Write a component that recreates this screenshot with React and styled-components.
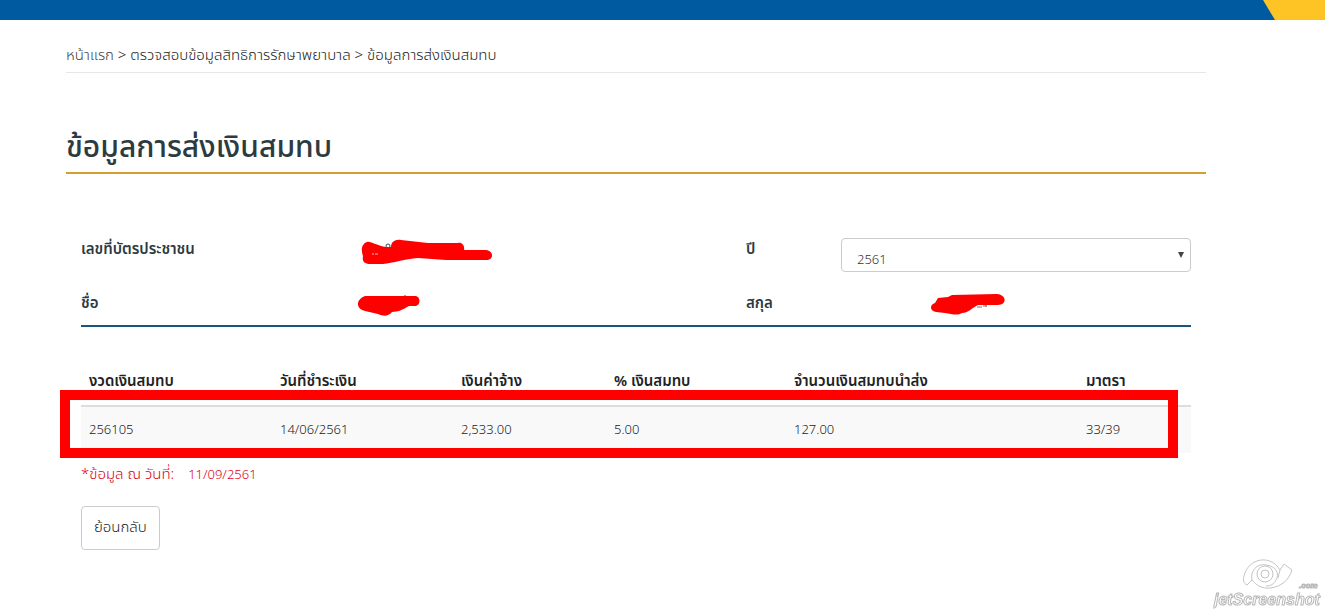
import React from 'react';
import styled, { createGlobalStyle } from 'styled-components';

const COLORS = {
	navy: '#005a9f',
	amber: '#fec325',
	gold: '#d59f2f',
	rule: '#1b557e',
	title: '#2d3b41',
	text: '#222',
	mark: '#f00',
	note: '#d90016',
	border: '#ccc',
};

const COLUMNS = [
	{ title: 'งวดเงินสมทบ', width: 191 },
	{ title: 'วันที่ชำระเงิน', width: 181 },
	{ title: 'เงินค่าจ้าง', width: 153 },
	{ title: '% เงินสมทบ', width: 180 },
	{ title: 'จำนวนเงินสมทบนำส่ง', width: 292 },
	{ title: 'มาตรา', width: 113 },
];

const ROWS = [['256105', '14/06/2561', '2,533.00', '5.00', '127.00', '33/39']];

const TABLE_WIDTH = COLUMNS.reduce((sum, column) => sum + column.width, 0);

const App = () => {
	return (
		<>
			<GlobalStyle />
			<TopBar>
				<TopBarCorner />
			</TopBar>
			<Page>
				<Breadcrumb aria-label="breadcrumb">
					<a href="#home">หน้าแรก</a> &gt; <Crumb href="#rights">ตรวจสอบข้อมูลสิทธิการรักษาพยาบาล</Crumb> &gt;{' '}
					<Crumb as="span">ข้อมูลการส่งเงินสมทบ</Crumb>
				</Breadcrumb>
				<Title>ข้อมูลการส่งเงินสมทบ</Title>

				<Content>
					<Details>
						<Label>เลขที่บัตรประชาชน</Label>
						<Value>
							<IdScribble />
						</Value>
						<Label as="label" htmlFor="year">ปี</Label>
						<SelectWrapper>
							<Select id="year" defaultValue="2561">
								<option>2561</option>
							</Select>
							<Arrow viewBox="0 0 6 6" aria-hidden="true">
								<path d="M0 0h6L3 6z" />
							</Arrow>
						</SelectWrapper>
						<Label>ชื่อ</Label>
						<Value>
							<NameScribble />
						</Value>
						<Label>สกุล</Label>
						<Value $indent>
							<SurnameScribble />
						</Value>
					</Details>

					<TableWrapper>
						<Table>
							<colgroup>
								{COLUMNS.map(column => (
									<col key={column.title} style={{ width: `${(column.width / TABLE_WIDTH) * 100}%` }} />
								))}
							</colgroup>
							<thead>
								<tr>
									{COLUMNS.map(column => (
										<HeadCell key={column.title} scope="col">{column.title}</HeadCell>
									))}
								</tr>
							</thead>
							<tbody>
								{ROWS.map(row => (
									<Row key={row[0]}>
										{row.map(value => (
											<Cell key={value}>{value}</Cell>
										))}
									</Row>
								))}
							</tbody>
						</Table>
						<Highlight />
					</TableWrapper>

					<Note>
						<span>*ข้อมูล ณ วันที่:</span>
						<NoteDate>11/09/2561</NoteDate>
					</Note>
					<BackButton type="button">ย้อนกลับ</BackButton>
				</Content>
			</Page>
			<Watermark />
		</>
	);
};

const IdScribble = () => (
	<Scribble width="136" height="30" viewBox="0 0 136 30">
		<circle cx="30" cy="8" r="2" fill="none" stroke="#444" />
		<path d="M9 4C13 3 19 8 28 9L33 9C33 4 37 1 43 2L70 5L100 5C104 4 107 8 106 12L128 12C136 13 136 22 128 22L88 22L60 20C47 21 35 25 25 26L12 26C6 26 4 23 5 18C3 13 3 6 9 4Z" />
		<path d="M14 16h2M17 16h3" stroke="#ffb3b3" />
	</Scribble>
);

const NameScribble = () => (
	<Scribble width="66" height="24" viewBox="0 0 66 24">
		<path d="M7 4L57 4C63 4 63 14 57 14L51 14C46 17 40 20 34 20C30 25 25 24 20 22L7 19C-3 17-2 7 7 4Z" />
		<path d="M46 4h2" stroke="#822" />
	</Scribble>
);

const SurnameScribble = () => (
	<Scribble width="76" height="24" viewBox="0 0 76 24">
		<path d="M46 15h5M55 15v-2M52 14h4" stroke="#777" />
		<path d="M7 6L17 5L21 3L66 2C76 3 76 13 67 13L47 13C41 16 37 21 31 21C26 24 21 22 14 21L5 20C-2 19-1 12 4 11Z" />
	</Scribble>
);

const Watermark = () => (
	<WatermarkArt viewBox="0 0 112 54" aria-label="jetScreenshot.com">
		<g fill="#fff" stroke="#c4c4c4" strokeWidth="1">
			<path d="M44 3C52 0 62 3 67 12L71 6L79 12C76 22 68 29 57 30C49 31 43 27 39 22L34 27C30 25 30 22 31 18C33 10 38 5 44 3Z" />
			<path d="M39 22C37 13 44 5 53 7C63 8 67 16 63 22C61 26 58 28 53 28M67 12L65 20" fill="none" />
			<circle cx="52" cy="16" r="8" />
			<circle cx="52" cy="16" r="4" />
		</g>
		<WatermarkText x="1" y="47">jetScreenshot</WatermarkText>
		<WatermarkText x="86" y="30" $small>.com</WatermarkText>
	</WatermarkArt>
);

const GlobalStyle = createGlobalStyle`
	* {
		box-sizing: border-box;
	}

	body {
		margin: 0;
		background: #fff;
		color: ${COLORS.text};
		font-family: 'Noto Sans Thai', 'Open Sans', 'Noto Sans', sans-serif;
		font-size: 15px;
		font-weight: 300;
		line-height: 30px;
	}
`;

const TopBar = styled.header`
	display: flex;
	justify-content: flex-end;
	height: 20px;
	background: ${COLORS.navy};
`;

const TopBarCorner = styled.div`
	width: 62px;
	background: ${COLORS.amber};
	clip-path: polygon(0 0, 100% 0, 100% 100%, 12px 100%);
`;

const Page = styled.main`
	padding: 20px 119px 0 66px;
`;

const Breadcrumb = styled.nav`
	border-bottom: 1px solid #e7e7e7;
	line-height: 32px;

	a {
		color: #444;
		text-decoration: none;
	}
`;

const Crumb = styled.a`
	&& {
		color: ${COLORS.text};
	}
`;

const Title = styled.h1`
	margin: 52px 0 0;
	border-bottom: 2px solid ${COLORS.gold};
	color: ${COLORS.title};
	font-size: 30px;
	font-weight: 500;
	line-height: 47px;
`;

const Content = styled.section`
	padding: 64px 15px 0;
`;

const Details = styled.div`
	display: grid;
	grid-template-columns: 277fr 388fr 95fr 350fr;
	grid-template-rows: 34px 33px;
	row-gap: 20px;
	border-bottom: 2px solid ${COLORS.rule};
`;

const Label = styled.div`
	color: ${COLORS.title};
	font-weight: 600;
	line-height: 24px;
`;

const Value = styled.div`
	padding-left: ${props => (props.$indent ? '90px' : '0')};
`;

const Scribble = styled.svg`
	display: block;
	fill: ${COLORS.mark};
`;

const SelectWrapper = styled.div`
	position: relative;
`;

const Select = styled.select`
	display: block;
	width: 100%;
	height: 34px;
	padding: 10px 15px 0;
	border: 1px solid ${COLORS.border};
	border-radius: 4px;
	background: #fff;
	color: #333;
	font: inherit;
	font-size: 13px;
	line-height: 22px;
	appearance: none;
`;

const Arrow = styled.svg`
	position: absolute;
	top: 14px;
	right: 7px;
	width: 6px;
	height: 6px;
	fill: #444;
	pointer-events: none;
`;

const TableWrapper = styled.div`
	position: relative;
	margin-top: 32px;
`;

const Table = styled.table`
	width: 100%;
	border-collapse: collapse;
	table-layout: fixed;
`;

const HeadCell = styled.th`
	height: 47px;
	padding: 0 8px;
	border-bottom: 2px solid #ddd;
	font-weight: 600;
	text-align: left;
	white-space: nowrap;
`;

const Row = styled.tr`
	background: #f9f9f9;
`;

const Cell = styled.td`
	padding: 8px;
	font-size: 13px;
`;

const Highlight = styled.div`
	position: absolute;
	top: 31px;
	right: 13px;
	left: -21px;
	height: 68px;
	border: 10px solid ${COLORS.mark};
`;

const Note = styled.p`
	display: flex;
	gap: 14px;
	margin: 7px 0 16px;
	color: ${COLORS.note};
`;

const NoteDate = styled.span`
	font-size: 13px;
`;

const BackButton = styled.button`
	height: 44px;
	padding: 0 12px;
	border: 1px solid ${COLORS.border};
	border-radius: 4px;
	background: #fff;
	color: ${COLORS.text};
	font: inherit;
`;

const WatermarkArt = styled.svg`
	position: fixed;
	right: 0;
	bottom: 0;
	width: 112px;
	height: 54px;
`;

const WatermarkText = styled.text`
	fill: #fff;
	stroke: #b8b8b8;
	stroke-width: 1px;
	font: italic 700 ${props => (props.$small ? '8px' : '16px')} 'Liberation Sans', sans-serif;
`;

export default App;
